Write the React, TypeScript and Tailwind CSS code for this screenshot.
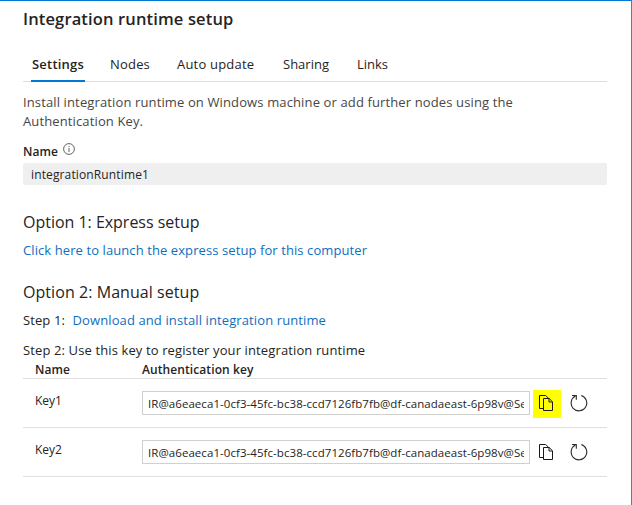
const KEY_VALUE = "IR@a6eaeca1-0cf3-45fc-bc38-ccd7126fb7fb@df-canadaeast-6p98v@Se";

const tabs = [
  { label: "Nodes", className: "ml-[25px] w-[41px] tracking-[0.19px]" },
  { label: "Auto update", className: "ml-[26px] w-[78px] tracking-[0.2px]" },
  { label: "Sharing", className: "ml-[28px] w-[46px]" },
  { label: "Links", className: "ml-[28px] w-[32px]" },
];

const keys = [
  { name: "Key1", highlighted: true },
  { name: "Key2", highlighted: false },
];

function InfoIcon() {
  return (
    <svg width="12" height="12" viewBox="0 0 12 12" fill="none" stroke="#555453" strokeWidth="0.9">
      <circle cx="6" cy="6" r="5.4" />
      <path d="M6 5v4" />
      <path d="M6 3v1" />
    </svg>
  );
}

function CopyIcon() {
  return (
    <svg width="16" height="18" viewBox="0 0 16 18" fill="none" stroke="#1b1a19" strokeWidth="1">
      <path d="M5.5 14.5h-4v-13h6.2l3 3" />
      <path d="M5.5 4.5h5.7l3.3 3.3v8.7h-9z" />
      <path d="M11 4.5v3.5h3.5" />
    </svg>
  );
}

function RefreshIcon() {
  return (
    <svg width="18" height="18" viewBox="0 0 18 18" fill="none" stroke="#2b2a29" strokeWidth="1.1">
      <path d="M11.3 1.6A7.8 7.8 0 1 1 5.4 2.1" />
      <path d="M2 1.5h4.3v4.2" />
    </svg>
  );
}

export default function App() {
  return (
    <div className="h-[505px] w-[632px] overflow-hidden whitespace-nowrap border-r border-t border-r-[#767676] border-t-[#0078d4] bg-white pl-[23px] pr-[24px] font-['Open_Sans','Noto_Sans',sans-serif] text-[13px] text-[#252423]">
      <h1 className="mt-[9px] h-[18px] text-[16.5px] font-semibold leading-[18px] tracking-[0.14px]">Integration runtime setup</h1>

      <nav className="mt-5 flex h-[34px] border-b border-[#e1dfdd] pl-2 leading-8">
        <div className="h-[34px] w-[54px] border-b-2 border-[#0078d4] pl-px font-semibold tracking-[0.2px]">Settings</div>
        {tabs.map((tab) => (
          <div key={tab.label} className={tab.className}>{tab.label}</div>
        ))}
      </nav>

      <p className="mt-[11px] leading-[19px] tracking-[0.127px] text-[#484644]">
        Install integration runtime on Windows machine or add further nodes using the
        <br />
        Authentication Key.
      </p>

      <div className="mt-[10px] flex h-5 gap-[5px] text-xs font-semibold leading-[22px] tracking-[0.1px]">
        Name
        <span className="pt-[2px]"><InfoIcon /></span>
      </div>
      <div className="mt-[2px] h-[22px] rounded-[2px] bg-[#efefef] pl-2 text-xs leading-[24px] tracking-[0.13px]">integrationRuntime1</div>

      <h2 className="mt-[25px] h-6 text-[16px] leading-6 tracking-[-0.02px]">Option 1: Express setup</h2>
      <div className="mt-[6px] h-5 leading-5 tracking-[0.09px] text-[#106ebe]">Click here to launch the express setup for this computer</div>

      <h2 className="mt-5 h-6 text-[16px] leading-6 tracking-[0.06px]">Option 2: Manual setup</h2>
      <div className="mt-[6px] flex h-5 leading-5">
        <span className="w-[49.5px] tracking-[0.1px]">Step 1:</span>
        <span className="tracking-[0.11px] text-[#106ebe]">Download and install integration runtime</span>
      </div>
      <div className="mt-[10px] h-5 leading-5 tracking-[0.12px]">Step 2: Use this key to register your integration runtime</div>

      <div className="flex h-[19px] border-b border-[#e1dfdd] pl-3 text-xs font-semibold leading-[20px] tracking-[0.09px]">
        <span className="w-[107px]">Name</span>
        <span>Authentication key</span>
      </div>
      {keys.map((key) => (
        <div key={key.name} className="flex h-[49px] border-b border-[#e1dfdd] pl-3 text-xs">
          <span className="w-[107px] pt-3 leading-5">{key.name}</span>
          <div className="mt-3 h-6 w-[388px] border border-[#d2d0ce] px-[5px]">
            <div className="overflow-hidden text-[11.5px] leading-[23px] tracking-[0.06px]">{KEY_VALUE}</div>
          </div>
          <div className={`ml-[3px] mt-[11px] h-7 w-7 pl-[5px] pt-1 ${key.highlighted ? "bg-[#ffff00]" : ""}`}>
            <CopyIcon />
          </div>
          <div className="ml-[9px] mt-[15px]">
            <RefreshIcon />
          </div>
        </div>
      ))}
    </div>
  );
}
